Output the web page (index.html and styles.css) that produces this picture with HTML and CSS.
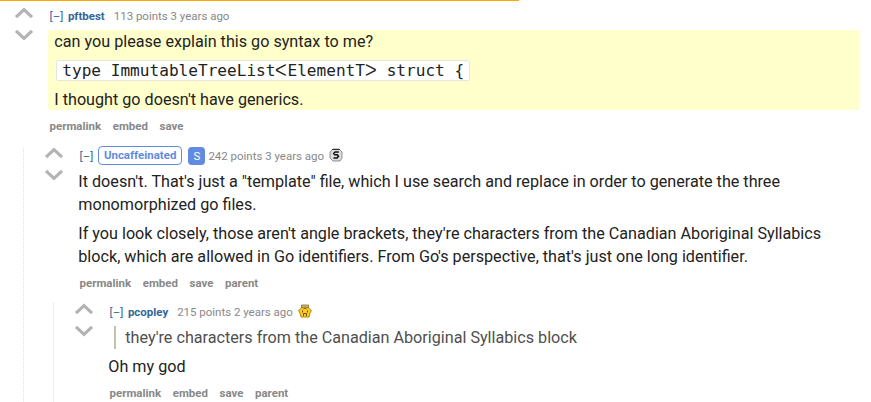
FILE: index.html
```html
<!DOCTYPE html>
<html lang="en">
<head>
<meta charset="utf-8">
<title>Comments</title>
<link rel="stylesheet" href="styles.css">
</head>
<body>
<svg class="defs" width="0" height="0">
  <symbol id="up" viewBox="0 0 20 13"><path d="M2 10.2 L10 2.6 L18 10.2"/></symbol>
  <symbol id="down" viewBox="0 0 20 13"><path d="M2 2.8 L10 10.4 L18 2.8"/></symbol>
</svg>
<div class="progress"></div>
<main class="thread">
  <article class="comment root">
    <div class="votes"><svg><use href="#up"/></svg><svg><use href="#down"/></svg></div>
    <div class="entry">
      <header class="tagline"><a class="toggle">[–]</a><a class="author">pftbest</a><span class="meta">113 points 3 years ago</span></header>
      <div class="md highlighted">
        <p>can you please explain this go syntax to me?</p>
        <p><code>type ImmutableTreeListᐸElementTᐳ struct {</code></p>
        <p>I thought go doesn't have generics.</p>
      </div>
      <footer class="buttons"><a>permalink</a><a>embed</a><a>save</a></footer>
    </div>
  </article>
  <div class="child">
    <article class="comment">
      <div class="votes"><svg><use href="#up"/></svg><svg><use href="#down"/></svg></div>
      <div class="entry">
        <header class="tagline"><a class="toggle">[–]</a><a class="user-tag">Uncaffeinated</a><a class="submitter">S</a><span class="meta after-badge">242 points 3 years ago</span>
          <svg class="award silver" viewBox="0 0 14 14"><path d="M4 1h6l3 3v6l-2 3H4l-3-3V4z" fill="#ddd" stroke="#777" stroke-width=".8"/><path d="M3 1.500h8" stroke="#333"/><path d="M9.800 4H6.200L4.700 5.400l1 1.300h2.600l1.200 1.500-1.400 1.800H4.500" fill="none" stroke="#111" stroke-width="1.500"/></svg></header>
        <div class="md">
          <p>It doesn't. That's just a "template" file, which I use search and replace in order to generate the three monomorphized go files.</p>
          <p>If you look closely, those aren't angle brackets, they're characters from the Canadian Aboriginal Syllabics block, which are allowed in Go identifiers. From Go's perspective, that's just one long identifier.</p>
        </div>
        <footer class="buttons"><a>permalink</a><a>embed</a><a>save</a><a>parent</a></footer>
      </div>
    </article>
    <div class="child">
      <article class="comment">
        <div class="votes"><svg><use href="#up"/></svg><svg><use href="#down"/></svg></div>
        <div class="entry">
          <header class="tagline"><a class="toggle">[–]</a><a class="author">pcopley</a><span class="meta">215 points 2 years ago</span>
            <svg class="award gold" viewBox="0 0 14 14"><path d="M3.500 1h7v3h-7z" fill="#cbbd90" stroke="#806936" stroke-width=".8"/><path d="M7 3l3 .5 3.400 3-1.400 2.500L11 13H3L2 9 .6 6.500l3.400-3z" fill="#fc2" stroke="#a87800" stroke-width=".9"/><path d="M4.500 6.500v2M9.500 6.500v2M5.500 12V9.500h3V12M5.500 5l1.500-1 1.500 1" fill="none" stroke="#6a4e00"/></svg></header>
          <div class="md">
            <blockquote><p>they're characters from the Canadian Aboriginal Syllabics block</p></blockquote>
            <p>Oh my god</p>
          </div>
          <footer class="buttons"><a>permalink</a><a>embed</a><a>save</a><a>parent</a></footer>
        </div>
      </article>
    </div>
  </div>
</main>
</body>
</html>
```
FILE: styles.css
```css
* { box-sizing: border-box; }
body { margin: 0; height: 402px; overflow: hidden; background: #fff; font-family: Roboto, "Liberation Sans", sans-serif; color: #222; }
.defs { display: block; }
.progress { width: 519px; height: 1px; background: #ffa500; }
.thread { height: 401px; overflow: hidden; padding: 1px 12px 0 13px; }
.comment { display: flex; }
.votes { width: 20px; margin-right: 15px; margin-left: 1px; padding-top: 5px; flex: none; }
.votes svg { display: block; width: 20px; height: 13px; margin-bottom: 7.6px; fill: none; stroke: #b3b3b3; stroke-width: 3.2; }
.entry { flex: 1; min-width: 0; margin-left: -1px; }
.tagline { display: flex; align-items: center; height: 28px; padding-left: 1.6px; font-size: 11.47px; color: #888; white-space: nowrap; }
.toggle { color: #369; margin-right: 4.7px; }
.author { color: #369; font-weight: 700; }
.meta { margin-left: 9px; }
.after-badge { margin-left: 3px; }
.user-tag { height: 19px; padding: 0 5px; border: 1px solid #628ae0; border-radius: 4px; color: #628ae0; font-weight: 700; line-height: 17px; }
.submitter { width: 17px; height: 18px; margin-left: 6px; border-radius: 4px; background: #628ae0; color: #fff; line-height: 18px; text-align: center; }
.award { width: 14px; height: 14px; margin: 0 0 2px 5px; }
.silver { margin-bottom: 1px; }
.md { padding-left: 0.3px; font-size: 16.17px; line-height: 23px; }
.md p { margin: 0; }
.md > p + p, .md > blockquote + p { margin-top: 6px; }
.highlighted { padding: 0 6.3px; height: 79.6px; border-radius: 2px; background: #ffc; }
.highlighted + .buttons { height: 32.4px; }
code { margin: 0 2px; padding: 0 5px; border: 1px solid #e6e6de; border-radius: 2px; background: #fff; font: 16.1px "DejaVu Sans Mono", monospace; }
blockquote { margin: 0 0 0 6px; padding-left: 9px; border-left: 2px solid #c5c1ad; color: #4f4f4f; }
.buttons { display: flex; align-items: center; gap: 11.6px; height: 30px; padding-left: 1.6px; font-size: 11.47px; font-weight: 700; color: #888; }
.child { position: relative; margin-left: 30px; }
.child::before { content: ""; position: absolute; left: -20px; top: 5px; bottom: -20px; border-left: 1px dotted #ddf; }
```
